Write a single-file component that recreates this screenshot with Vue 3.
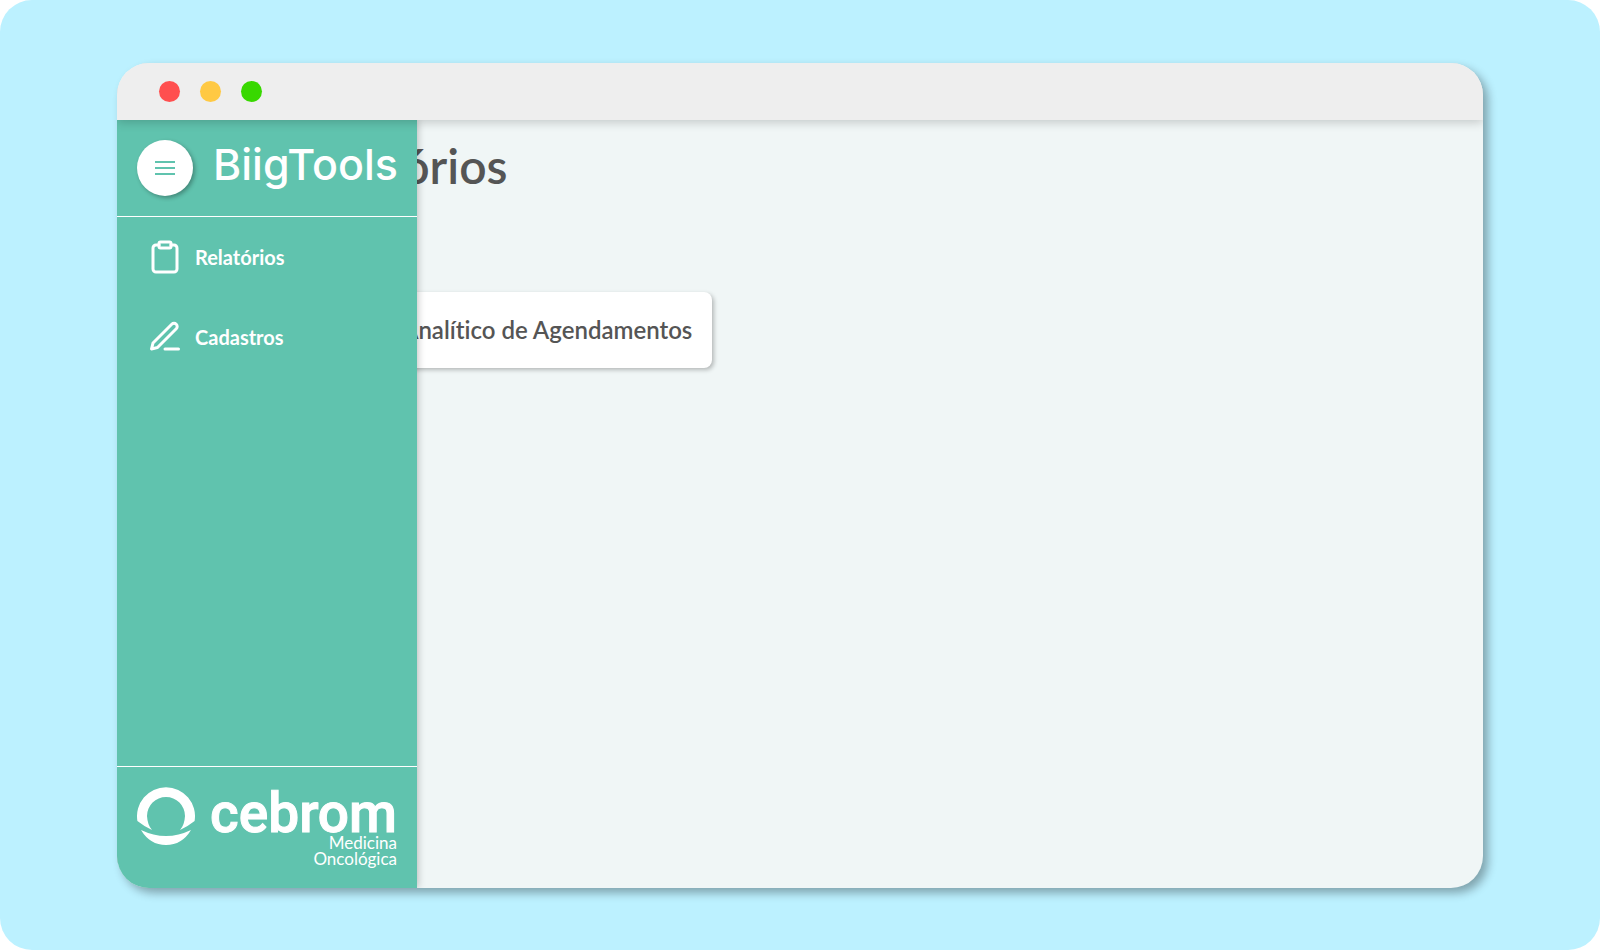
<script setup>
const items = [
  { label: 'Relatórios', icon: 'clipboard' },
  { label: 'Cadastros', icon: 'pen' },
]
</script>

<template>
  <div class="page">
    <div class="window">
      <header class="titlebar">
        <span class="dot red"></span>
        <span class="dot yellow"></span>
        <span class="dot green"></span>
      </header>
      <div class="body">
        <aside class="sidebar">
          <div class="brand">
            <button class="toggle" type="button" aria-label="Menu">
              <svg width="20" height="14" viewBox="0 0 20 14" fill="none" stroke="#60c3ae" stroke-width="2">
                <path d="M0 1h20M0 7h20M0 13h20" />
              </svg>
            </button>
            <span class="wordmark">BiigTools</span>
          </div>
          <nav class="nav">
            <a v-for="item in items" :key="item.label" href="#" class="link">
              <svg width="36" height="36" viewBox="0 0 24 24" fill="none" stroke="#fff" stroke-width="2" stroke-linecap="round" stroke-linejoin="round">
                <template v-if="item.icon === 'clipboard'">
                  <path d="M16 4h2a2 2 0 0 1 2 2v14a2 2 0 0 1-2 2H6a2 2 0 0 1-2-2V6a2 2 0 0 1 2-2h2" />
                  <rect x="8" y="2" width="8" height="4" rx="1" />
                </template>
                <template v-else>
                  <path d="M12 20h9" />
                  <path d="M16.5 3.5a2.121 2.121 0 0 1 3 3L7 19l-4 1 1-4L16.5 3.5z" />
                </template>
              </svg>
              <span class="label">{{ item.label }}</span>
            </a>
          </nav>
          <footer class="client">
            <svg width="58" height="58" viewBox="0 0 58 58" fill="#fff">
              <path d="M0.4 34A29 29 0 1 1 57.6 34Q50 40 43 43Q47.5 38 48 29A19 19 0 0 0 10 29Q10.500 38 15 43Q8 40 0.400 34Z" />
              <path d="M4 43Q29 55 54 43Q45 58 29 58Q13 58 4 43Z" />
            </svg>
            <div class="client-name">
              <span class="cebrom">cebrom</span>
              <span class="tagline">Medicina<br />Oncológica</span>
            </div>
          </footer>
        </aside>
        <main class="content">
          <h1>Relatórios</h1>
          <a href="#" class="card">Relatório Analítico de Agendamentos</a>
        </main>
      </div>
    </div>
  </div>
</template>

<style>
body {
  margin: 0;
  background: #fff;
}
</style>

<style scoped>
.page {
  box-sizing: border-box;
  min-height: 100vh;
  padding: 63px 117px 62px;
  display: flex;
  background: #bcf1ff;
  border-radius: 32px;
  font-family: "Lato", "Open Sans", sans-serif;
  font-variant-ligatures: none;
}
.window {
  flex: 1;
  display: flex;
  flex-direction: column;
  border-radius: 32px;
  overflow: hidden;
  background: #f0f6f6;
  box-shadow: 5px 5px 10px rgba(0, 0, 0, 0.32);
}
.titlebar {
  position: relative;
  z-index: 2;
  box-sizing: border-box;
  height: 57px;
  padding-left: 42px;
  display: flex;
  align-items: center;
  gap: 20px;
  background: #eee;
  box-shadow: 0 2px 10px rgba(0, 0, 0, 0.2);
}
.dot {
  width: 21px;
  height: 21px;
  border-radius: 50%;
}
.red { background: #ff4f4f; }
.yellow { background: #ffc943; }
.green { background: #38d800; }
.body {
  flex: 1;
  display: flex;
}
.sidebar {
  position: relative;
  z-index: 1;
  flex: none;
  width: 300px;
  display: flex;
  flex-direction: column;
  background: #60c3ae;
  color: #fff;
  box-shadow: 0 0 8px rgba(0, 0, 0, 0.3);
}
.brand {
  display: flex;
  align-items: flex-start;
  gap: 20px;
  padding: 20px;
  border-bottom: 1px solid #fff;
}
.toggle {
  flex: none;
  width: 56px;
  height: 56px;
  padding: 0;
  border: 0;
  border-radius: 50%;
  display: grid;
  place-items: center;
  background: #fff;
  box-shadow: 2px 2px 4px rgba(0, 0, 0, 0.3);
  cursor: pointer;
}
.wordmark {
  font-family: "Inter", sans-serif;
  font-size: 43px;
  font-weight: 500;
  line-height: 48px;
}
.nav {
  flex: 1;
}
.link {
  display: flex;
  align-items: center;
  gap: 12px;
  height: 80px;
  padding-left: 30px;
  color: #fff;
  text-decoration: none;
  font-size: 20px;
  font-weight: 700;
}
.label {
  padding-bottom: 1px;
}
.client {
  display: flex;
  justify-content: space-between;
  align-items: flex-start;
  height: 81px;
  padding: 20px;
  border-top: 1px solid #fff;
}
.client-name {
  display: flex;
  flex-direction: column;
  align-items: flex-end;
}
.cebrom {
  font-family: "Roboto", sans-serif;
  font-weight: 500;
  font-size: 55px;
  line-height: 52px;
  margin-bottom: -4px;
  -webkit-text-stroke: 1px #fff;
}
.tagline {
  font-size: 17px;
  line-height: 16px;
  text-align: right;
}
.content {
  flex: 1;
  display: flex;
  flex-direction: column;
  align-items: flex-start;
  margin-left: -160px;
  padding: 20px 24px;
  color: #555;
}
h1 {
  margin: 0 0 100px;
  padding-left: 14px;
  font-size: 48px;
  line-height: 52px;
  font-weight: 600;
}
.card {
  box-sizing: border-box;
  display: flex;
  align-items: center;
  height: 76px;
  padding: 0 20px 2px;
  border-radius: 8px;
  background: #fff;
  color: #555;
  text-decoration: none;
  font-size: 24px;
  font-weight: 600;
  white-space: nowrap;
  box-shadow: 2px 2px 4px rgba(0, 0, 0, 0.25);
}
</style>
